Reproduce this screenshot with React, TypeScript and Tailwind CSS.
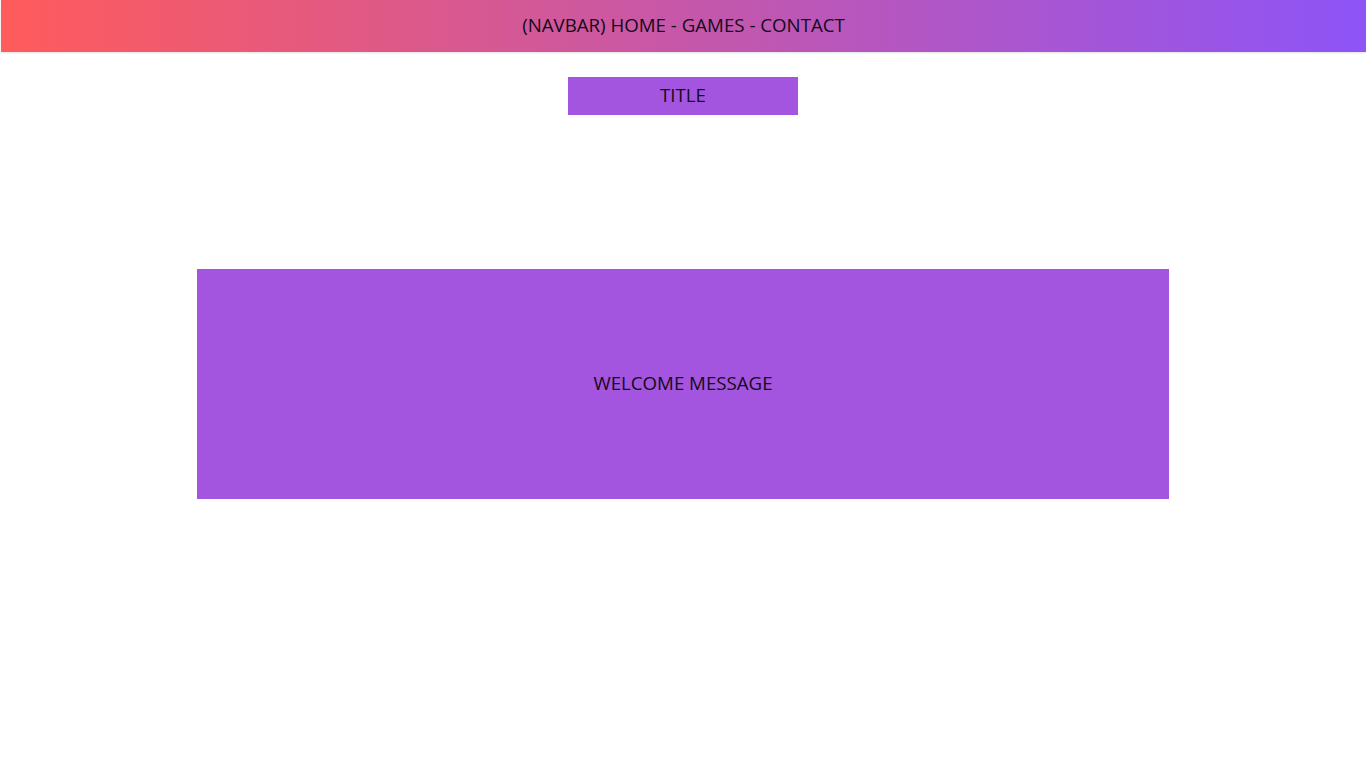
import React from "react";

export default function App() {
  return (
    <div className="min-h-screen bg-white text-[#14091c]" style={{ fontFamily: '"Open Sans", sans-serif' }}>
      <nav className="ml-px h-[52px] flex items-center justify-center pb-[2px] bg-[linear-gradient(to_right,#ff5b5b,#8d54f7)] shadow-[0_1px_2px_rgba(0,0,0,0.12)] text-[18.7px]">
        (NAVBAR) HOME - GAMES - CONTACT
      </nav>
      <div className="flex flex-col items-center">
        <div className="mt-[25px] w-[230px] h-[38px] bg-[#a355e0] flex items-center justify-center pb-[2px] text-[18.7px]">
          TITLE
        </div>
        <div className="mt-[154px] w-[972px] h-[230px] bg-[#a355e0] flex items-center justify-center pb-[2px] text-[18.7px]">
          WELCOME MESSAGE
        </div>
      </div>
    </div>
  );
}
